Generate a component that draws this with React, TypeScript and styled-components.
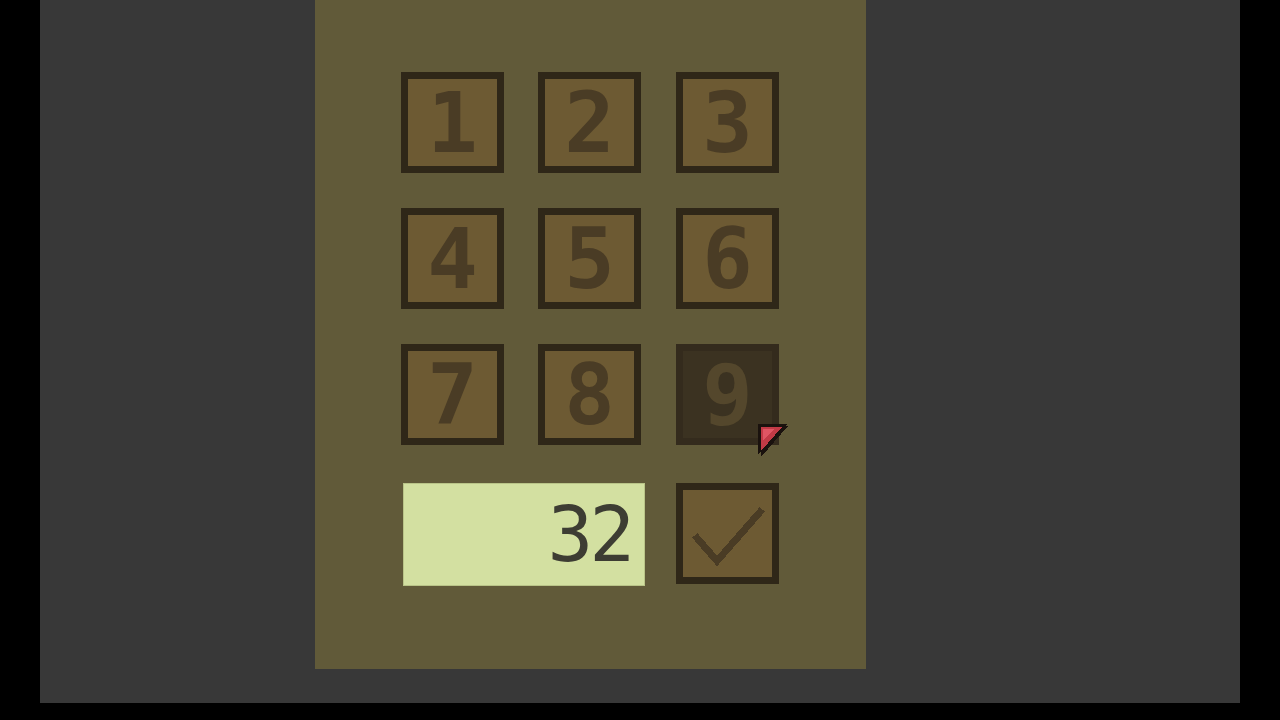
import styled, { createGlobalStyle } from 'styled-components'

const GlobalStyle = createGlobalStyle`
  html, body {
    margin: 0;
    padding: 0;
    background: #000;
    width: 1280px;
    height: 720px;
    overflow: hidden;
  }
`

const Screen = styled.div`
  display: flex;
  width: 1280px;
  height: 720px;
  background: #000;
`

const Viewport = styled.div`
  margin-left: 40px;
  width: 1200px;
  height: 703px;
  background: #383838;
  display: flex;
`

const Panel = styled.div`
  margin-left: 275px;
  width: 551px;
  height: 669px;
  background: #615a39;
  box-sizing: border-box;
  padding: 72px 0 0 86px;
  display: grid;
  grid-template-columns: 102px 103px 103px;
  grid-template-rows: 101px 101px 104px 103px;
  column-gap: 35px;
  row-gap: 35px;
  align-content: start;
`

const Key = styled.button<{ $pressed?: boolean }>`
  position: relative;
  width: 103px;
  height: 101px;
  padding: 0;
  box-sizing: border-box;
  border: 7px solid ${({ $pressed }) => ($pressed ? '#342b1d' : '#2f2718')};
  background: ${({ $pressed }) => ($pressed ? '#3b3221' : '#6d5a33')};
  color: ${({ $pressed }) => ($pressed ? '#54472c' : '#4a3c25')};
  font-family: 'DejaVu Sans Mono', 'Liberation Mono', monospace;
  font-weight: bold;
  font-size: 84px;
  line-height: 1;
  display: flex;
  align-items: center;
  justify-content: center;
  cursor: pointer;
`

const Display = styled.div`
  grid-column: span 2;
  margin-left: 2px;
  width: 242px;
  height: 103px;
  box-sizing: border-box;
  background: #d3e0a1;
  border: 1px solid #b9c488;
  color: #3d3d33;
  font-family: 'DejaVu Sans Mono', 'Liberation Mono', monospace;
  font-size: 76px;
  letter-spacing: -4px;
  display: flex;
  align-items: center;
  justify-content: flex-end;
  padding-right: 13px;
`

const Pointer = styled.svg`
  position: absolute;
  left: 71px;
  top: 69px;
  width: 36px;
  height: 38px;
  pointer-events: none;
`

const CheckIcon = () => (
  <svg width="74" height="66" viewBox="0 0 74 66" shapeRendering="crispEdges">
    <polyline
      points="6,37 26,60 69,11"
      fill="none"
      stroke="#4a3c25"
      strokeWidth="7"
      strokeLinejoin="miter"
      strokeLinecap="square"
    />
  </svg>
)

const keys = ['1', '2', '3', '4', '5', '6', '7', '8', '9']

export default function App() {
  return (
    <>
      <GlobalStyle />
      <Screen>
        <Viewport>
          <Panel>
            {keys.map((k) => (
              <Key key={k} $pressed={k === '9'}>
                {k}
                {k === '9' && (
                  <Pointer viewBox="0 0 36 38" shapeRendering="crispEdges">
                    <polygon points="4,4 33,4 4,35" fill="#1a120e" />
                    <polygon points="7,8 34,6 7,37" fill="#1a120e" />
                    <polygon points="7,7 28,7 7,31" fill="#c23a46" />
                    <polygon points="9,9 20,9 9,21" fill="#df5563" />
                  </Pointer>
                )}
              </Key>
            ))}
            <Display>32</Display>
            <Key>
              <CheckIcon />
            </Key>
          </Panel>
        </Viewport>
      </Screen>
    </>
  )
}
